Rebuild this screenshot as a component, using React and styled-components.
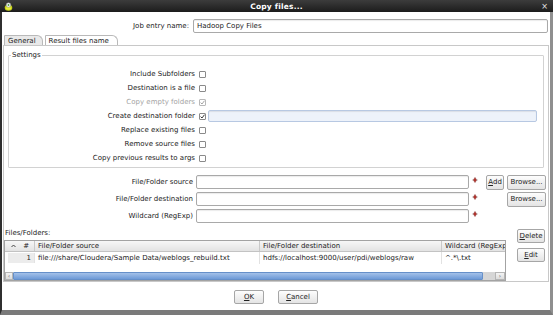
import React from 'react';
import styled, { createGlobalStyle } from 'styled-components';

const GlobalStyle = createGlobalStyle`
  html, body {
    margin: 0;
    padding: 0;
    background: #ffffff;
  }
  body {
    font-family: "DejaVu Sans", "Liberation Sans", sans-serif;
    font-size: 7px;
    color: #222222;
  }
  * {
    box-sizing: border-box;
  }
`;

const Window = styled.div`
  width: 553px;
  height: 315px;
  display: flex;
  flex-direction: column;
  overflow: hidden;
  background: #ffffff;
`;

const TitleBar = styled.div`
  height: 12px;
  flex: none;
  display: grid;
  grid-template-columns: 20px 1fr 20px;
  align-items: center;
  background: linear-gradient(#3c3c3c, #1c1c1c);
  color: #ffffff;
`;

const TitleText = styled.div`
  text-align: center;
  font-weight: bold;
  font-size: 7.5px;
  letter-spacing: 0.2px;
`;

const TitleIcon = styled.div`
  display: flex;
  align-items: center;
  padding-left: 4px;
`;

const CloseMark = styled.div`
  text-align: right;
  padding-right: 5px;
  font-size: 8px;
  color: #e8e8e8;
`;

const Frame = styled.div`
  flex: 1;
  min-height: 0;
  display: flex;
  flex-direction: column;
  border-left: 2px solid #2f2f2f;
  border-right: 3px solid #8f8f8f;
  border-bottom: 5px solid #7a7a7a;
  padding: 0 1px;
  background: #ffffff;
`;

const JobRow = styled.div`
  flex: none;
  display: grid;
  grid-template-columns: 186px 1fr;
  column-gap: 4px;
  align-items: center;
  margin-top: 7px;
  height: 14px;
  padding-right: 1px;
`;

const Label = styled.div`
  text-align: right;
  white-space: nowrap;
  line-height: 9px;
  color: ${p => (p.disabled ? '#a3a3a3' : '#222222')};
  padding-right: ${p => p.pad || 0}px;
`;

const TextInput = styled.div`
  height: ${p => p.h || 14}px;
  border: 1px solid ${p => (p.tint ? '#b7c8e2' : '#a9a9a9')};
  border-radius: 2px;
  background: ${p => (p.tint ? '#edf2fa' : '#ffffff')};
  box-shadow: inset 0 1px 1px rgba(0, 0, 0, 0.08);
  padding: 0 3px;
  display: flex;
  align-items: center;
  white-space: nowrap;
  overflow: hidden;
`;

const TabRow = styled.div`
  flex: none;
  display: flex;
  margin-top: 2px;
  height: 10px;
  padding-left: 1px;
  align-items: flex-end;
`;

const Tab = styled.div`
  height: 10px;
  padding: 0 ${p => (p.active ? 6 : 8)}px 0 3px;
  display: flex;
  align-items: center;
  border: 1px solid #b9b9b9;
  border-bottom: none;
  border-radius: 1px 6px 0 0;
  background: ${p => (p.active ? '#e9e9e9' : '#ffffff')};
  margin-right: 2px;
  white-space: nowrap;
`;

const Panel = styled.div`
  flex: 1;
  min-height: 0;
  display: flex;
  flex-direction: column;
  border: 1px solid #c8c8c8;
`;

const Group = styled.fieldset`
  flex: none;
  margin: 5px 4px 0;
  padding: 7px 0 2px;
  border: 1px solid #d2d2d2;
  border-radius: 1px;
`;

const Legend = styled.legend`
  padding: 0 1px;
  margin-left: 2px;
  line-height: 9px;
`;

const CheckGrid = styled.div`
  display: grid;
  grid-template-columns: 190px 9px 329px;
  grid-auto-rows: 14px;
  align-items: center;
`;

const Box = styled.div`
  width: 7px;
  height: 7px;
  border: 1px solid ${p => (p.disabled ? '#b9b9b9' : '#8a8a8a')};
  border-radius: 1px;
  background: #ffffff;
  display: flex;
  align-items: center;
  justify-content: center;
`;

const FormGrid = styled.div`
  flex: none;
  display: grid;
  grid-template-columns: 189px 273px 11px 18px 39px;
  grid-auto-rows: 14px;
  column-gap: 3px;
  row-gap: 3px;
  margin-top: 7px;
  align-items: center;
`;

const Diamond = styled.div`
  align-self: start;
  margin-top: 2px;
  display: flex;
`;

const Button = styled.div`
  height: ${p => p.h || 15}px;
  width: ${p => (p.w ? `${p.w}px` : 'auto')};
  border: 1px solid #a6a6a6;
  border-radius: 2px;
  background: linear-gradient(#fdfdfd, #e4e4e4);
  display: flex;
  align-items: center;
  justify-content: center;
  white-space: nowrap;
  color: #222222;
`;

const Key = styled.span`
  text-decoration: underline;
`;

const FilesSection = styled.div`
  flex: none;
  display: flex;
  margin-top: 6px;
  gap: 11px;
  padding-right: 2px;
`;

const FilesColumn = styled.div`
  width: 502px;
  display: flex;
  flex-direction: column;
`;

const SectionLabel = styled.div`
  line-height: 9px;
  padding-left: 1px;
  margin-bottom: 2px;
`;

const SideButtons = styled.div`
  width: 28px;
  display: flex;
  flex-direction: column;
  gap: 5px;
`;

const TableBox = styled.div`
  flex: none;
  border: 1px solid #a3a3a3;
  background: #ffffff;
  overflow: hidden;
  display: flex;
  flex-direction: column;
`;

const GridRow = styled.div`
  flex: none;
  display: grid;
  grid-template-columns: 30px 225px 182px 80px;
  height: ${p => (p.head ? 11 : 13)}px;
  background: ${p => (p.head ? 'linear-gradient(#f7f7f7, #e3e3e3)' : '#ffffff')};
  border-bottom: 1px solid ${p => (p.head ? '#c3c3c3' : 'transparent')};
`;

const Cell = styled.div`
  display: flex;
  align-items: center;
  justify-content: ${p => p.justify || 'flex-start'};
  padding: 0 3px;
  border-right: 1px solid ${p => (p.head ? '#c9c9c9' : '#e2e2e2')};
  white-space: nowrap;
  overflow: hidden;
  background: ${p => (p.shade ? '#ececec' : 'transparent')};
  margin: ${p => (p.shade ? '1px 0 1px 3px' : 0)};
`;

const HeadFirst = styled(Cell)`
  padding: 0 5px 0 6px;
`;

const Spacer = styled.div`
  flex: none;
  height: 7px;
`;

const ScrollBar = styled.div`
  flex: none;
  display: flex;
  height: 8px;
  background: #d6d6d6;
`;

const ScrollArrow = styled.div`
  width: ${p => p.w}px;
  display: flex;
  align-items: center;
  justify-content: center;
  background: linear-gradient(#f4f4f4, #dcdcdc);
  border: 1px solid #b5b5b5;
  font-size: 6px;
  line-height: 6px;
  color: #555;
`;

const ScrollThumb = styled.div`
  width: 470px;
  background: linear-gradient(#a4c1e9, #6e9ad7);
  border: 1px solid #6690c9;
  border-radius: 1px;
`;

const ScrollTrack = styled.div`
  flex: 1;
`;

const Footer = styled.div`
  height: 28px;
  flex: none;
  display: flex;
  justify-content: center;
  gap: 14px;
  padding-top: 8px;
`;

const Check = ({ on, disabled }) => (
  <Box disabled={disabled}>
    {on && (
      <svg width="5" height="5" viewBox="0 0 5 5">
        <path d="M0.6 2.6 L2 4 L4.5 0.7" fill="none" stroke={disabled ? '#9a9a9a' : '#222'} strokeWidth="0.9" />
      </svg>
    )}
  </Box>
);

const VarIcon = () => (
  <Diamond>
    <svg width="6" height="6" viewBox="0 0 6 6">
      <path d="M0 3 H6" stroke="#b0b0b0" strokeWidth="0.8" />
      <path d="M3 0.4 L4.6 3 L3 5.6 L1.4 3 Z" fill="#b8362f" stroke="#6e1a16" strokeWidth="0.4" />
    </svg>
  </Diamond>
);

const KettleIcon = () => (
  <svg width="9" height="9" viewBox="0 0 9 9">
    <ellipse cx="4.5" cy="5.8" rx="3.8" ry="3" fill="#c7d21c" />
    <ellipse cx="4.5" cy="6.2" rx="2.4" ry="1.6" fill="#e9ee3a" />
    <circle cx="4.5" cy="3" r="2.3" fill="#f2f2f2" stroke="#8a8a8a" strokeWidth="0.5" />
    <circle cx="4.5" cy="3" r="0.9" fill="#4a9a3a" />
  </svg>
);

const Caret = () => (
  <svg width="5" height="4" viewBox="0 0 5 4">
    <path d="M0.5 3 L2.5 1 L4.5 3" fill="none" stroke="#333" strokeWidth="0.9" />
  </svg>
);

const settings = [
  { label: 'Include Subfolders' },
  { label: 'Destination is a file' },
  { label: 'Copy empty folders', on: true, disabled: true },
  { label: 'Create destination folder', on: true, field: true },
  { label: 'Replace existing files' },
  { label: 'Remove source files' },
  { label: 'Copy previous results to args' },
];

const App = () => (
  <>
    <GlobalStyle />
    <Window>
      <TitleBar>
        <TitleIcon>
          <KettleIcon />
        </TitleIcon>
        <TitleText>Copy files...</TitleText>
        <CloseMark>×</CloseMark>
      </TitleBar>
      <Frame>
        <JobRow>
          <Label>Job entry name:</Label>
          <TextInput>Hadoop Copy Files</TextInput>
        </JobRow>
        <TabRow>
          <Tab active>General</Tab>
          <Tab>Result files name</Tab>
        </TabRow>
        <Panel>
          <Group>
            <Legend>Settings</Legend>
            <CheckGrid>
              {settings.map(s => (
                <React.Fragment key={s.label}>
                  <Label pad={4} disabled={s.disabled}>{s.label}</Label>
                  <Check on={s.on} disabled={s.disabled} />
                  {s.field ? <TextInput tint h={12} /> : <div />}
                </React.Fragment>
              ))}
            </CheckGrid>
          </Group>
          <FormGrid>
            <Label>File/Folder source</Label>
            <TextInput />
            <VarIcon />
            <Button>
              <Key>A</Key>dd
            </Button>
            <Button>Browse...</Button>

            <Label>File/Folder destination</Label>
            <TextInput />
            <VarIcon />
            <div />
            <Button>Browse...</Button>

            <Label>Wildcard (RegExp)</Label>
            <TextInput />
            <VarIcon />
            <div />
            <div />
          </FormGrid>
          <FilesSection>
            <FilesColumn>
              <SectionLabel>Files/Folders:</SectionLabel>
              <TableBox>
                <GridRow head>
                  <HeadFirst head justify="space-between">
                    <Caret />
                    <span>#</span>
                  </HeadFirst>
                  <Cell head>File/Folder source</Cell>
                  <Cell head>File/Folder destination</Cell>
                  <Cell head>Wildcard (RegExp)</Cell>
                </GridRow>
                <GridRow>
                  <Cell shade justify="flex-end">1</Cell>
                  <Cell>file:///share/Cloudera/Sample Data/weblogs_rebuild.txt</Cell>
                  <Cell>hdfs://localhost:9000/user/pdi/weblogs/raw</Cell>
                  <Cell>^.*\.txt</Cell>
                </GridRow>
                <Spacer />
                <ScrollBar>
                  <ScrollArrow w={8}>‹</ScrollArrow>
                  <ScrollThumb />
                  <ScrollTrack />
                  <ScrollArrow w={10}>›</ScrollArrow>
                </ScrollBar>
              </TableBox>
            </FilesColumn>
            <SideButtons>
              <Button h={14}>
                <Key>D</Key>elete
              </Button>
              <Button h={14}>
                <Key>E</Key>dit
              </Button>
            </SideButtons>
          </FilesSection>
        </Panel>
        <Footer>
          <Button w={30} h={14}>
            <Key>O</Key>K
          </Button>
          <Button w={40} h={14}>
            <Key>C</Key>ancel
          </Button>
        </Footer>
      </Frame>
    </Window>
  </>
);

export default App;
